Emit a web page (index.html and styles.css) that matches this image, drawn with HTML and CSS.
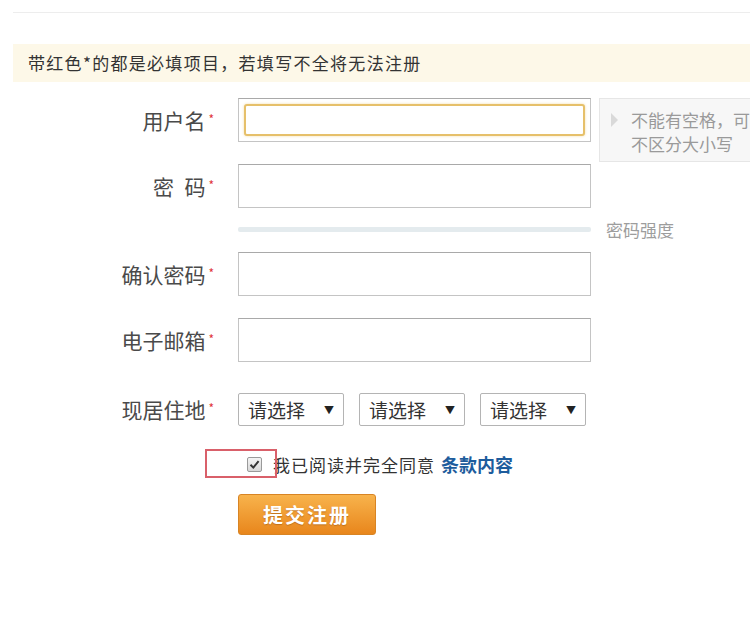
FILE: index.html
```
<html>
    <head>
        <meta charset="utf-8">
        <link rel="stylesheet" href="styles.css">
    </head>
    <body>
        <div class="topline"></div>
        <div class="notice">带红色*的都是必填项目，若填写不全将无法注册</div>

        <div class="form">
            <div class="row">
                <label class="label">用户名<i>*</i></label>
                <div class="field focus"><input type="text"></div>
                <div class="tip">
                    <span class="tip-arrow"></span>
                    不能有空格，可<br>不区分大小写
                </div>
            </div>
            <div class="row">
                <label class="label">密&ensp;码<i>*</i></label>
                <div class="field"><input type="password"></div>
            </div>
            <div class="strength">
                <div class="bar"></div>
                <span>密码强度</span>
            </div>
            <div class="row">
                <label class="label">确认密码<i>*</i></label>
                <div class="field"><input type="password"></div>
            </div>
            <div class="row">
                <label class="label">电子邮箱<i>*</i></label>
                <div class="field"><input type="text"></div>
            </div>
            <div class="row row-area">
                <label class="label">现居住地<i>*</i></label>
                <div class="selects">
                    <span class="select">请选择<b>&#9660;</b></span>
                    <span class="select">请选择<b>&#9660;</b></span>
                    <span class="select">请选择<b>&#9660;</b></span>
                </div>
            </div>
            <div class="agree">
                <span class="mark"></span>
                <span class="check">
                    <svg width="11" height="11" viewBox="0 0 11 11"><path d="M1.5 5.8 L4.3 8.6 L9.6 2.2" fill="none" stroke="#333" stroke-width="2"/></svg>
                </span>
                <span class="agree-text">我已阅读并完全同意</span>
                <a class="terms">条款内容</a>
            </div>
            <div class="submit">
                <button class="btn">提交注册</button>
            </div>
        </div>
    </body>
</html>
```

FILE: styles.css
```
*{
    font-family: "Noto Sans CJK SC", "Liberation Sans", sans-serif;
    box-sizing: border-box;
}
body{
    margin: 0px;
    width: 750px;
    overflow: hidden;
    background: #fff;
}
.topline{
    margin: 12px 0px 0px 13px;
    border-top: 1px solid #ededed;
}
.notice{
    margin: 31px 0px 0px 13px;
    height: 38px;
    line-height: 38px;
    padding-left: 15px;
    background: #fdf8e8;
    color: #333;
    font-size: 17px;
    letter-spacing: 1.3px;
}
.form{
    padding-top: 16px;
}
.row{
    position: relative;
    display: flex;
    align-items: center;
    height: 44px;
    margin-bottom: 22px;
}
.label{
    width: 216px;
    margin-right: 22px;
    padding-right: 2px;
    text-align: right;
    font-size: 21px;
    color: #4a4a4a;
    white-space: nowrap;
}
.label i{
    font-style: normal;
    color: #e0323a;
    font-size: 12px;
    vertical-align: 5px;
    margin-left: 3px;
}
.field{
    width: 353px;
    height: 44px;
    border: 1px solid #c4c4c4;
    border-top-color: #a9a9a9;
    padding: 5px;
    background: #fff;
}
.field input{
    width: 100%;
    height: 100%;
    border: 2px solid transparent;
    border-radius: 3px;
    outline: none;
    font-size: 16px;
    background: #fff;
}
.field.focus input{
    border-color: #e6c06a;
    box-shadow: 0px 0px 3px #f3ddaa;
}
.tip{
    position: absolute;
    left: 599px;
    top: 0px;
    width: 160px;
    height: 64px;
    padding: 9px 0px 0px 31px;
    background: #f7f7f7;
    border: 1px solid #e6e6e6;
    color: #9a9a9a;
    font-size: 17px;
    line-height: 24px;
    white-space: nowrap;
}
.tip-arrow{
    position: absolute;
    left: 11px;
    top: 14px;
    border-left: 7px solid #d9d9d9;
    border-top: 7px solid transparent;
    border-bottom: 7px solid transparent;
}
.row:nth-child(2){
    margin-bottom: 12px;
}
.strength{
    display: flex;
    align-items: center;
    height: 18px;
    padding-left: 238px;
    margin-bottom: 14px;
}
.strength .bar{
    width: 353px;
    height: 5px;
    background: #e4ebee;
    border-radius: 2px;
}
.strength span{
    margin-left: 15px;
    font-size: 17px;
    color: #9d9d9d;
}
.row-area{
    margin-top: 25px;
    margin-bottom: 18px;
}
.selects{
    display: flex;
    gap: 15px;
}
.select{
    display: flex;
    align-items: center;
    justify-content: space-between;
    width: 106px;
    height: 33px;
    padding: 0px 9px;
    border: 1px solid #b4b4b4;
    border-radius: 2px;
    font-size: 19px;
    color: #333;
}
.select b{
    font-size: 10px;
    color: #222;
}
.agree{
    position: relative;
    display: flex;
    align-items: center;
    height: 30px;
    padding-left: 247px;
}
.mark{
    position: absolute;
    left: 205px;
    top: 0px;
    width: 72px;
    height: 29px;
    border: 2px solid #d9606a;
}
.check{
    display: flex;
    align-items: center;
    justify-content: center;
    width: 15px;
    height: 15px;
    border: 1px solid #9a9a9a;
    border-radius: 2px;
    background: linear-gradient(#f4f4f4, #d8d8d8);
    margin-right: 11px;
}
.agree-text{
    font-size: 17px;
    color: #333;
    letter-spacing: 1px;
}
.terms{
    margin-left: 6px;
    font-size: 18px;
    font-weight: bold;
    color: #1d5c9c;
}
.submit{
    padding: 15px 0px 0px 238px;
}
.btn{
    width: 138px;
    height: 41px;
    border: 1px solid #d88424;
    border-radius: 3px;
    background: linear-gradient(#f8b34c, #e8861c);
    color: #fff;
    font-size: 20px;
    font-weight: bold;
    letter-spacing: 2px;
    text-shadow: 0px 1px 1px #c0701a;
}
```
